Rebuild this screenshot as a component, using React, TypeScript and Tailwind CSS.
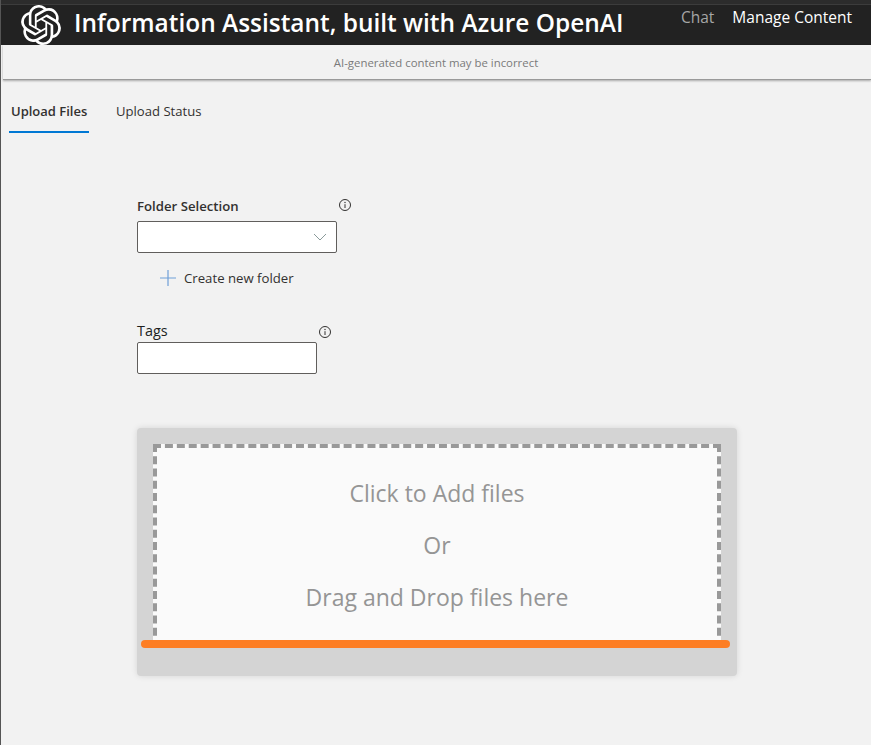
export default function App() {
  const Info = () => (
    <svg width="14" height="14" viewBox="0 0 14 14" fill="none" className="block">
      <circle cx="7" cy="7" r="5.5" stroke="#323130" strokeWidth="1" />
      <path d="M7 6.2V10" stroke="#323130" strokeWidth="1" />
      <rect x="6.4" y="3.9" width="1.2" height="1.2" fill="#323130" />
    </svg>
  );
  return (
    <div className="w-[871px] h-[745px] overflow-hidden bg-[#f2f2f2] flex flex-col font-['Open_Sans',sans-serif] border-l border-[#555555]">
      <header className="h-[45px] shrink-0 bg-[#222222] border-t-[4px] border-[#2c2c2c] shadow-[inset_0_1px_0_#3c3c3c] flex items-start text-white">
        <svg width="40" height="40" viewBox="0 0 24 24" fill="currentColor" className="ml-[20px] mt-[1px] shrink-0">
          <path d="M22.2819 9.8211a5.9847 5.9847 0 0 0-.5157-4.9108 6.0462 6.0462 0 0 0-6.5098-2.9A6.0651 6.0651 0 0 0 4.9807 4.1818a5.9847 5.9847 0 0 0-3.9977 2.9 6.0462 6.0462 0 0 0 .7427 7.0966 5.98 5.98 0 0 0 .511 4.9107 6.051 6.051 0 0 0 6.5146 2.9001A5.9847 5.9847 0 0 0 13.2599 24a6.0557 6.0557 0 0 0 5.7718-4.2058 5.9894 5.9894 0 0 0 3.9977-2.9001 6.0557 6.0557 0 0 0-.7475-7.0729zm-9.022 12.6081a4.4755 4.4755 0 0 1-2.8764-1.0408l.1419-.0804 4.7783-2.7582a.7948.7948 0 0 0 .3927-.6813v-6.7369l2.02 1.1686a.071.071 0 0 1 .038.052v5.5826a4.504 4.504 0 0 1-4.4945 4.4944zm-9.6607-4.1254a4.4708 4.4708 0 0 1-.5346-3.0137l.142.0852 4.783 2.7582a.7712.7712 0 0 0 .7806 0l5.8428-3.3685v2.3324a.0804.0804 0 0 1-.0332.0615L9.74 19.9502a4.4992 4.4992 0 0 1-6.1408-1.6464zM2.3408 7.8956a4.485 4.485 0 0 1 2.3655-1.9728V11.6a.7664.7664 0 0 0 .3879.6765l5.8144 3.3543-2.0201 1.1685a.0757.0757 0 0 1-.071 0l-4.8303-2.7865A4.504 4.504 0 0 1 2.3408 7.872zm16.5963 3.8558L13.1038 8.364 15.1192 7.2a.0757.0757 0 0 1 .071 0l4.8303 2.7913a4.4944 4.4944 0 0 1-.6765 8.1042v-5.6772a.79.79 0 0 0-.407-.667zm2.0107-3.0231l-.142-.0852-4.7735-2.7818a.7759.7759 0 0 0-.7854 0L9.409 9.2297V6.8974a.0662.0662 0 0 1 .0284-.0615l4.8303-2.7866a4.4992 4.4992 0 0 1 6.6802 4.66zM8.3065 12.863l-2.02-1.1638a.0804.0804 0 0 1-.038-.0567V6.0742a4.4992 4.4992 0 0 1 7.3757-3.4537l-.142.0805L8.704 5.459a.7948.7948 0 0 0-.3927.6813zm1.0976-2.3654l2.602-1.4998 2.6069 1.4998v2.9994l-2.5974 1.4997-2.6067-1.4997Z" />
        </svg>
        <h1 className="ml-[13px] text-[24.45px] leading-[37px] font-semibold whitespace-nowrap">
          Information Assistant, built with Azure OpenAI
        </h1>
        <nav className="ml-auto mr-[19px] flex gap-[18px] text-[15.5px] leading-[26px]">
          <span className="text-[#a6a6a6]">Chat</span>
          <span>Manage Content</span>
        </nav>
      </header>

      <div className="h-[35px] shrink-0 ml-[2px] border-b border-[#9a9a9a] shadow-[0_1px_2px_rgba(0,0,0,0.3)] flex items-center justify-center pt-[2px] pr-[2px] text-[11.4px] text-[#7a7a7a]">
        AI-generated content may be incorrect
      </div>

      <div className="flex h-[53px] text-[#323130] text-[13px]">
        <div className="ml-[8px] px-[2px] font-semibold border-b-2 border-[#0078d4] h-[53px] flex items-center pt-[12px] box-border w-[80px] whitespace-nowrap">
          Upload Files
        </div>
        <div className="ml-[27px] h-[53px] flex items-center pt-[10px] text-[13.1px]">Upload Status</div>
      </div>

      <main className="pl-[136px] pt-[64px] flex flex-col items-start">
        <div className="w-[215px] h-[19px] flex justify-between items-start">
          <label className="text-[13.2px] leading-[18px] font-semibold text-[#323130]">Folder Selection</label>
          <div className="mt-px">
            <Info />
          </div>
        </div>
        <div className="mt-[5px] w-[200px] h-[32px] bg-white border border-[#605e5c] rounded-[2px] flex items-center justify-end pr-[9px]">
          <svg width="14" height="8" viewBox="0 0 14 8" fill="none">
            <path d="M1 1l6 6 6-6" stroke="#8a9a9a" strokeWidth="1" />
          </svg>
        </div>
        <div className="mt-[15px] ml-[23px] flex items-center gap-[8px] text-[13.2px] leading-[20px] text-[#323130]">
          <svg width="16" height="16" viewBox="0 0 16 16" fill="none">
            <path d="M8 0v16M0 8h16" stroke="#6f9fd8" strokeWidth="1.2" />
          </svg>
          Create new folder
        </div>
        <div className="mt-[33px] w-[195px] h-[20px] flex justify-between items-start">
          <label className="text-[14.4px] leading-[20px] text-[#201f1e]">Tags</label>
          <div className="mt-[4px]">
            <Info />
          </div>
        </div>
        <div className="mt-px w-[180px] h-[32px] bg-white border border-[#605e5c] rounded-[2px]" />

        <div className="mt-[54px] w-[600px] h-[248px] bg-[#d4d4d4] rounded-[4px] shadow-[0_0_6px_rgba(0,0,0,0.12)] relative pl-[16px] pt-[16px]">
          <div className="w-[568px] h-[204px] bg-[#fafafa] border-[4px] border-dashed border-[#999999] flex flex-col items-center pt-[19px] text-[23px] leading-[52px] text-[#959595]">
            <span>Click to Add files</span>
            <span>Or</span>
            <span>Drag and Drop files here</span>
          </div>
          <div className="absolute left-[4px] top-[212px] w-[589px] h-[8px] rounded-full bg-[#fd7e24]" />
        </div>
      </main>
    </div>
  );
}
